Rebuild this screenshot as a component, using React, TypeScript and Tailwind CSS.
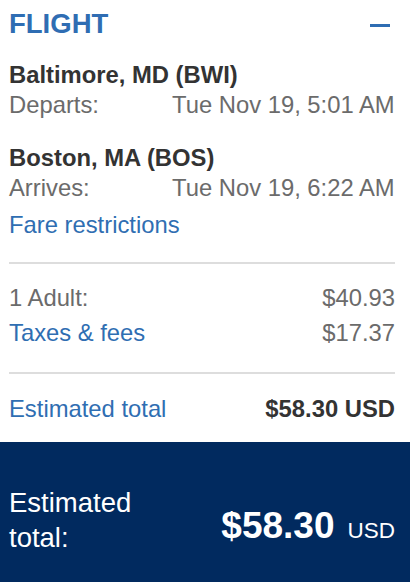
import React from "react";

const font = { fontFamily: '"Liberation Sans", Arial, Helvetica, sans-serif' };

export default function App() {
  return (
    <div className="w-[410px] h-[582px] overflow-hidden bg-white" style={font}>
      <div className="pl-[9px] pr-[15px]">
        <div className="flex items-center justify-between pt-[7px] h-[41px]">
          <div className="text-[27.5px] leading-[34px] font-bold text-[#2f6db3]">FLIGHT</div>
          <div className="w-[20px] h-[3px] bg-[#2f6db3] mr-[5px] mt-[3px]" />
        </div>

        <div className="mt-[19px] text-[23.8px] leading-[30px]">
          <div className="font-bold text-[#333333]">Baltimore, MD (BWI)</div>
          <div className="grid grid-cols-[163px_1fr] text-[#6b6b6b]">
            <span>Departs:</span>
            <span>Tue Nov 19, 5:01 AM</span>
          </div>
        </div>

        <div className="mt-[23px] text-[23.8px] leading-[30px]">
          <div className="font-bold text-[#333333]">Boston, MA (BOS)</div>
          <div className="grid grid-cols-[163px_1fr] text-[#6b6b6b]">
            <span>Arrives:</span>
            <span>Tue Nov 19, 6:22 AM</span>
          </div>
        </div>

        <div className="mt-[7px] text-[23.8px] leading-[30px] text-[#2f6eb2]">Fare restrictions</div>

        <div className="mt-[22px] h-[2px] bg-[#dddddd]" />

        <div className="mt-[19px] text-[23.8px] leading-[30px] flex flex-col gap-[5px]">
          <div className="flex justify-between text-[#6b6b6b]">
            <span>1 Adult:</span>
            <span>$40.93</span>
          </div>
          <div className="flex justify-between">
            <span className="text-[#2f6eb2]">Taxes &amp; fees</span>
            <span className="text-[#6b6b6b]">$17.37</span>
          </div>
        </div>

        <div className="mt-[24px] h-[2px] bg-[#dddddd]" />

        <div className="mt-[20px] flex justify-between text-[23.8px] leading-[30px]">
          <span className="text-[#2f6eb2]">Estimated total</span>
          <span className="font-bold text-[#333333]">$58.30 USD</span>
        </div>
      </div>

      <div className="mt-[18px] h-[140px] bg-[#012a5f] pl-[9px] pr-[15px] pt-[43px] text-white">
        <div className="flex items-end justify-between">
          <div className="text-[27.5px] leading-[35px]">
            <div>Estimated</div>
            <div>total:</div>
          </div>
          <div className="flex items-baseline pb-[6px]">
            <span className="text-[37px] leading-[37px] font-bold">$58.30</span>
            <span className="ml-[13px] text-[22.5px] leading-[37px]">USD</span>
          </div>
        </div>
      </div>
    </div>
  );
}
